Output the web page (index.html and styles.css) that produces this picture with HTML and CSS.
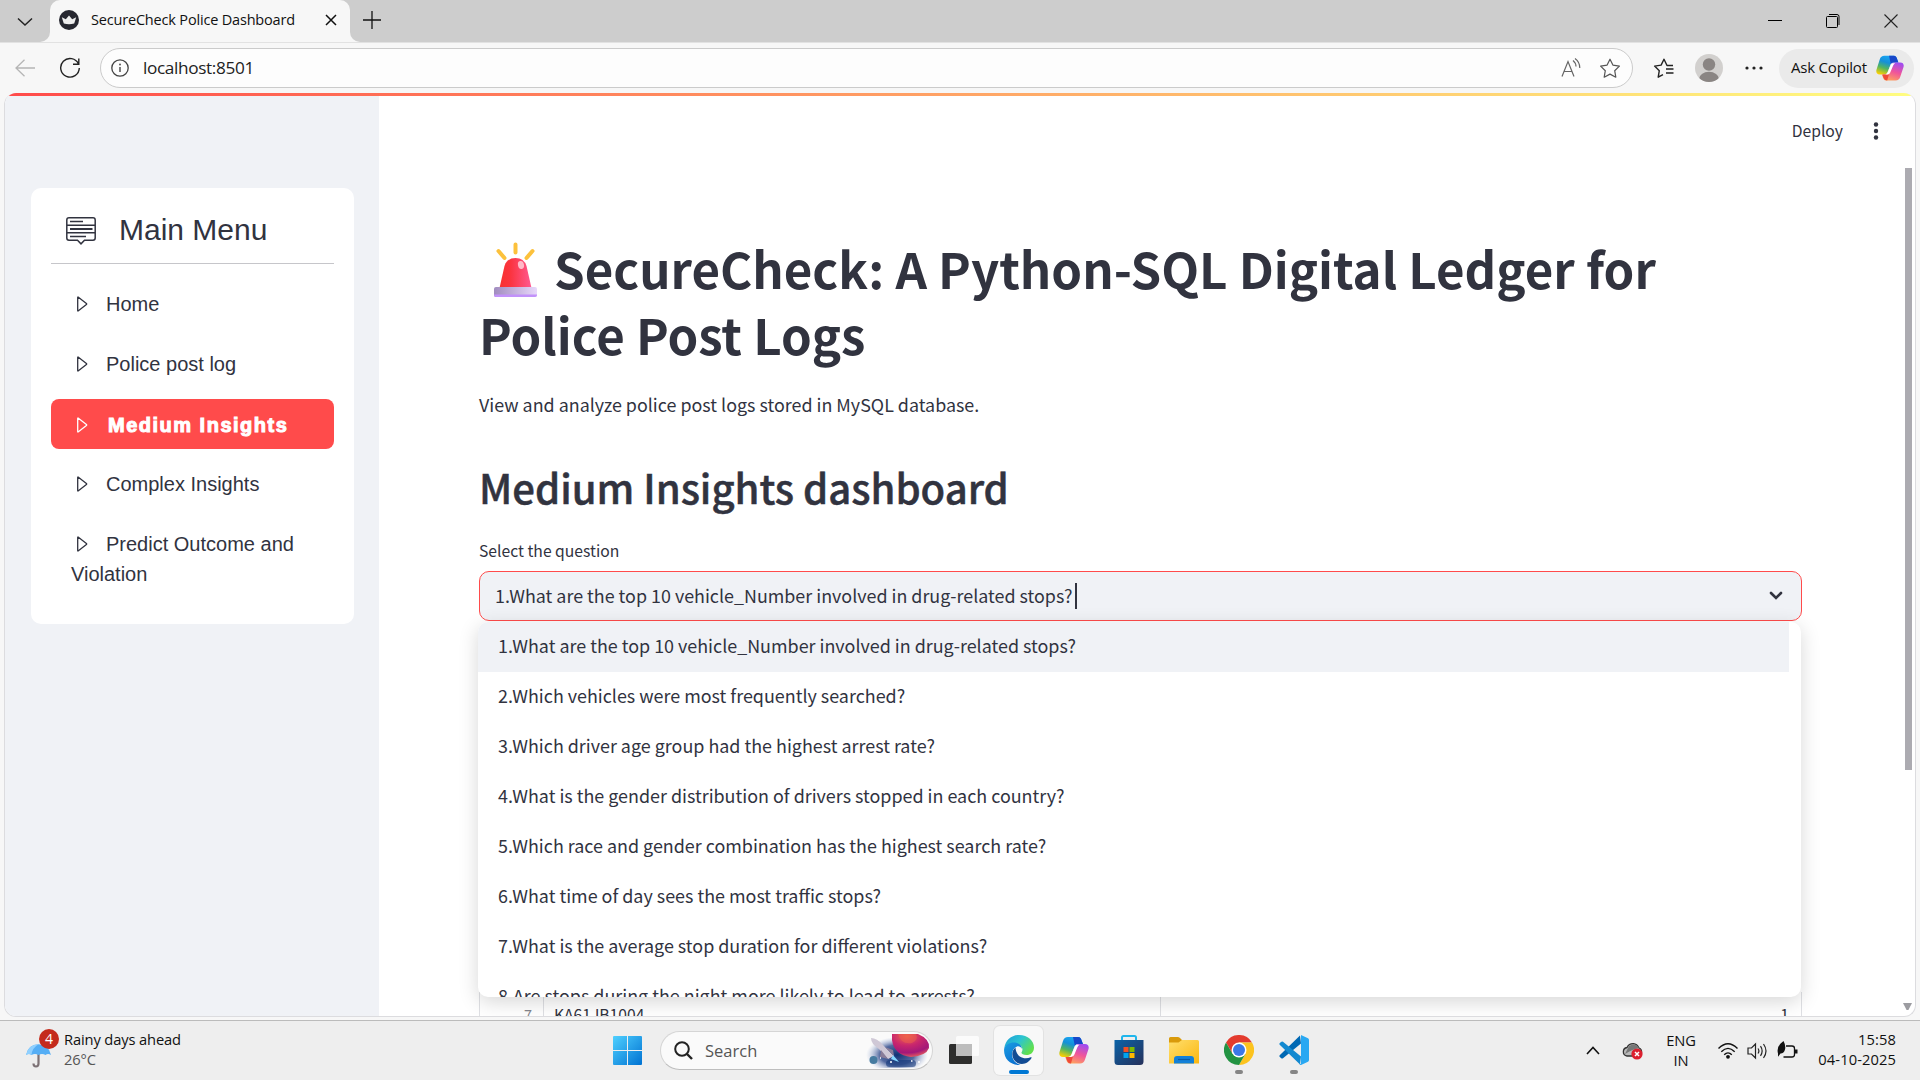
FILE: index.html
```
<!DOCTYPE html>
<html lang="en">
<head>
<meta charset="utf-8">
<title>SecureCheck Police Dashboard</title>
<link rel="stylesheet" href="styles.css">
</head>
<body>
<svg class="defs" aria-hidden="true">
  <defs>
    <linearGradient id="cpA" x1="0.6" y1="0" x2="0.2" y2="1"><stop offset="0" stop-color="#19a7f5"/><stop offset=".35" stop-color="#1590d8"/><stop offset=".65" stop-color="#52b560"/><stop offset="1" stop-color="#ffd000"/></linearGradient>
    <linearGradient id="cpB" x1="0.7" y1="0" x2="0.3" y2="1"><stop offset="0" stop-color="#a04cf0"/><stop offset=".5" stop-color="#f0559a"/><stop offset="1" stop-color="#ffa45c"/></linearGradient>
    <linearGradient id="edA" x1="0" y1="0" x2="1" y2=".6"><stop offset="0" stop-color="#1c9bd8"/><stop offset=".5" stop-color="#2cc4d2"/><stop offset="1" stop-color="#62e04c"/></linearGradient>
    <linearGradient id="edB" x1="0" y1="0" x2=".6" y2="1"><stop offset="0" stop-color="#1b9de2"/><stop offset="1" stop-color="#0a6fd0"/></linearGradient>
    <linearGradient id="win" x1="0" y1="0" x2="1" y2="1"><stop offset="0" stop-color="#4fd0ff"/><stop offset="1" stop-color="#0072d2"/></linearGradient>
    <linearGradient id="fold" x1="0" y1="0" x2="1" y2="1"><stop offset="0" stop-color="#ffdf6e"/><stop offset="1" stop-color="#fbb70f"/></linearGradient>
    <linearGradient id="store" x1="0" y1="0" x2="1" y2="1"><stop offset="0" stop-color="#0a63a8"/><stop offset="1" stop-color="#26305a"/></linearGradient>
    <linearGradient id="lamp" x1="0" y1="0" x2="1" y2="0"><stop offset="0" stop-color="#f8312f"/><stop offset=".35" stop-color="#fb3440"/><stop offset="1" stop-color="#ff5a92"/></linearGradient>
    <linearGradient id="lampbase" x1="0" y1="0" x2="1" y2="0"><stop offset="0" stop-color="#a18cbf"/><stop offset="1" stop-color="#e8d8fb"/></linearGradient>
    <radialGradient id="space"><stop offset="0" stop-color="#0e3174"/><stop offset=".55" stop-color="#36508f" stop-opacity=".85"/><stop offset="1" stop-color="#a5b6dc" stop-opacity="0"/></radialGradient>
    <radialGradient id="planet" cx=".4" cy=".1" r=".9"><stop offset="0" stop-color="#f0654c"/><stop offset=".45" stop-color="#c8266d"/><stop offset=".8" stop-color="#a3187a"/><stop offset="1" stop-color="#e0565f"/></radialGradient>
    <symbol id="copilot" viewBox="0 0 30 30">
      <path d="M9 2h10c2.500 0 3.200 2 3.800 4L24 9h-5c-2.200 0-3 1-3.700 3l-2.700 7c-.8 2.200-2 3-4.200 3H4c-3 0-4.200-2-3.500-5L4 6c.8-2.800 2.400-4 5-4z" fill="url(#cpA)"/>
      <path d="M14 2h5c2.500 0 3.200 2 3.800 4L24 9h-5c-1.500 0-2.500.5-3.200 1.800z" fill="#1747c9"/>
      <path d="M21 28.500H11c-2.500 0-3.200-2-3.800-4L6.200 22h3c2.200 0 3-1 3.700-3l3-7c.8-2.200 2-3 4.200-3h5.900c3 0 4.200 2 3.500 5L26 24.500c-.8 2.800-2.400 4-5 4z" fill="url(#cpB)"/>
      <path d="M7 22h4c2 0 3-1 3.500-2.500L12 28.400C9 28.500 8 26 7 22z" fill="#ef4a38"/>
      <path d="M17.500 9.800h3c-1 .5-1.600 1.300-2 2.200l-3 7.200c-.8 2-2 2.700-3.800 2.800h-2c1.500-.4 2.400-1.400 3-3l2.900-7c.4-1 1-1.800 1.900-2.200z" fill="#fff"/>
    </symbol>
    <symbol id="play" viewBox="0 0 20 20"><path d="M5.700 3.600v12.800q0 .9.700.4l8-6.200q.6-.6 0-1.200L6.400 3.200q-.7-.5-.7.400z" fill="none" stroke="currentColor" stroke-width="1.300"/></symbol>
  </defs>
</svg>

<div class="tabs">
  <div class="tab-search"><svg width="16" height="10" viewBox="0 0 16 10"><path d="M1 1.500l7 6.500 7-6.500" fill="none" stroke="#222" stroke-width="1.500"/></svg></div>
  <div class="tab">
    <svg width="20" height="20" viewBox="0 0 20 20"><circle cx="10" cy="10" r="10" fill="#262730"/><path d="M2.800 7.200l4 2 3.200-3.600 3.200 3.600 4-2-2 6.300q-5.200 1.600-10.400 0z" fill="#eee"/></svg>
    <span class="tab-title">SecureCheck Police Dashboard</span>
    <svg class="tab-close" width="12" height="12" viewBox="0 0 12 12"><path d="M1 1l10 10M11 1L1 11" stroke="#111" stroke-width="1.500"/></svg>
  </div>
  <div class="strip">
    <svg class="tab-new" width="18" height="18" viewBox="0 0 18 18"><path d="M9 0v18M0 9h18" stroke="#111" stroke-width="1.300"/></svg>
    <div class="win-controls">
      <svg width="14" height="14" viewBox="0 0 14 14"><path d="M0 6.500h14" stroke="#000"/></svg>
      <svg width="14" height="14" viewBox="0 0 14 14"><rect x=".5" y="2.500" width="11" height="11" rx="1" fill="none" stroke="#000"/><path d="M3 .5h8a2 2 0 0 1 2 2v8.500" fill="none" stroke="#000"/></svg>
      <svg width="14" height="14" viewBox="0 0 14 14"><path d="M.5.500l13 13M13.500.5l-13 13" stroke="#222" stroke-width="1.100"/></svg>
    </div>
  </div>
</div>

<div class="toolbar">
  <svg class="back" width="20" height="18" viewBox="0 0 20 18"><path d="M9.500.8L1 9l8.500 8.200M1 9h19" fill="none" stroke="#b5b5b5" stroke-width="1.300"/></svg>
  <svg class="reload" width="22" height="22" viewBox="0 0 22 22"><path d="M19.500 7A9.300 9.300 0 1 0 20.300 11M19.800 1.500V7.300H14" fill="none" stroke="#222" stroke-width="1.400"/></svg>
  <div class="address">
    <svg width="18" height="18" viewBox="0 0 18 18"><circle cx="9" cy="9" r="8.200" fill="none" stroke="#444" stroke-width="1.300"/><path d="M9 8v5" stroke="#444" stroke-width="1.400"/><circle cx="9" cy="5.500" r=".9" fill="#444"/></svg>
    <span class="url">localhost:8501</span>
    <svg class="read" width="20" height="20" viewBox="0 0 20 20"><path d="M1 18.500L7 3.500l6 15M3 13.500h8M12 2.500q3 2.500 3 6M14 .5q4.800 3.500 4.800 9.500" fill="none" stroke="#666" stroke-width="1.200"/></svg>
    <svg class="star" width="22" height="20" viewBox="0 0 22 20"><path d="M11 1.200l2.900 5.900 6.500 1-4.700 4.600 1.100 6.500-5.800-3.100-5.800 3.100 1.100-6.500L1.600 8.100l6.500-1z" fill="none" stroke="#555" stroke-width="1.200" stroke-linejoin="round"/></svg>
  </div>
  <svg class="favs" width="22" height="20" viewBox="0 0 22 20"><path d="M20 7.500h-6L11 1.200 8.100 7.100l-6.500 1 4.700 4.600-1.100 6.500 4.800-2.600M13 11h7.500M13 15h7.500" fill="none" stroke="#222" stroke-width="1.400" stroke-linejoin="round"/></svg>
  <svg class="avatar" width="28" height="28" viewBox="0 0 28 28"><defs><clipPath id="av"><circle cx="14" cy="14" r="14"/></clipPath></defs><g clip-path="url(#av)"><rect width="28" height="28" fill="#d2d0ce"/><circle cx="14" cy="10.500" r="6.200" fill="#8a8583"/><ellipse cx="14" cy="25" rx="10" ry="7.200" fill="#8a8583"/></g></svg>
  <svg class="more" width="18" height="4" viewBox="0 0 18 4"><g fill="#222"><circle cx="2" cy="2" r="1.600"/><circle cx="9" cy="2" r="1.600"/><circle cx="16" cy="2" r="1.600"/></g></svg>
  <div class="ask"><span>Ask Copilot</span><svg width="28" height="28"><use href="#copilot"/></svg></div>
</div>

<div class="viewport">
  <div class="page">
    <div class="rainbow"></div>
    <aside class="sidebar">
      <nav class="menu">
        <div class="menu-head">
          <svg width="30" height="28" viewBox="0 0 30 28" fill="none" stroke="#31333f" stroke-width="1.500"><path d="M3 .8h24a2.200 2.200 0 0 1 2.200 2.200v18a2.200 2.200 0 0 1-2.200 2.200h-8.500L15 26.800l-3.500-3.600H3A2.200 2.200 0 0 1 .8 21V3A2.200 2.200 0 0 1 3 .8zM1 8.200h28M1 15.800h28"/><path d="M4 4.600h13M4 19.400h16"/><path d="M4 12h22.500" stroke-width="2"/></svg>
          <span>Main Menu</span>
        </div>
        <div class="item"><svg><use href="#play"/></svg>Home</div>
        <div class="item"><svg><use href="#play"/></svg>Police post log</div>
        <div class="item active"><svg><use href="#play"/></svg><b>Medium Insights</b></div>
        <div class="item"><svg><use href="#play"/></svg>Complex Insights</div>
        <div class="item"><svg><use href="#play"/></svg>Predict Outcome and Violation</div>
      </nav>
    </aside>
    <main class="main">
      <header class="app-bar"><span>Deploy</span><svg width="6" height="18" viewBox="0 0 6 18"><g fill="#31333f"><circle cx="3" cy="2.500" r="2.200"/><circle cx="3" cy="9" r="2.200"/><circle cx="3" cy="15.500" r="2.200"/></g></svg></header>
      <h1><svg class="siren" width="43" height="56" viewBox="0 0 43 56"><g stroke="#fcc13c" stroke-width="4" stroke-linecap="round"><path d="M21.500 2.500v8M4.500 9l6 7M38.500 9l-6 7"/></g><path d="M5.500 46l5-22q2.500-8 11-8t11 8l5 22z" fill="url(#lamp)"/><ellipse cx="27" cy="23" rx="3" ry="4" fill="#ffb9c8" transform="rotate(-14 27 23)"/><rect y="45" width="43" height="10" rx="2" fill="url(#lampbase)"/><path d="M0 52.500h43v.5a2 2 0 0 1-2 2H2a2 2 0 0 1-2-2z" fill="#c292fa"/></svg><span class="l1">SecureCheck: A Python-SQL Digital Ledger for</span><br><span class="l2">Police Post Logs</span></h1>
      <p class="intro">View and analyze police post logs stored in MySQL database.</p>
      <h2>Medium Insights dashboard</h2>
      <label class="label">Select the question</label>
      <div class="select">
        <span class="value">1.What are the top 10 vehicle_Number involved in drug-related stops?</span><i class="caret"></i>
        <svg width="14" height="10" viewBox="0 0 14 10"><path d="M2 2l5 5 5-5" fill="none" stroke="#31333f" stroke-width="2.600" stroke-linecap="round"/></svg>
        <ul class="options">
          <li class="current">1.What are the top 10 vehicle_Number involved in drug-related stops?</li>
          <li>2.Which vehicles were most frequently searched?</li>
          <li>3.Which driver age group had the highest arrest rate?</li>
          <li>4.What is the gender distribution of drivers stopped in each country?</li>
          <li>5.Which race and gender combination has the highest search rate?</li>
          <li>6.What time of day sees the most traffic stops?</li>
          <li>7.What is the average stop duration for different violations?</li>
          <li>8.Are stops during the night more likely to lead to arrests?</li>
        </ul>
      </div>
      <div class="table-row"><span class="idx">7</span><span class="veh">KA61JB1004</span><span class="num">1</span></div>
    </main>
    <div class="scroll"><i class="thumb"></i><i class="down"></i></div>
  </div>
</div>

<div class="taskbar">
  <div class="weather">
    <div class="umbrella">
      <svg width="26" height="26" viewBox="0 0 26 26"><path d="M12.500 11v10.500q0 3-2.500 3t-2.500-3" fill="none" stroke="#7d7276" stroke-width="2.200"/><path d="M0 13Q2 2.500 12.500 2.200 23 2.500 25 13q-3-2-5.500 0-3.500-2-7 0-3.500-2-7 0Q3 11 0 13z" fill="#55aef5"/><path d="M0 13Q2 2.500 12.500 2.200 6 6 5.500 13 3 11 0 13z" fill="#8fd0ff"/></svg>
      <span class="badge">4</span>
    </div>
    <div class="weather-text"><span>Rainy days ahead</span><span class="dim">26°C</span></div>
  </div>
  <svg class="start" width="29" height="29" viewBox="0 0 29 29"><path d="M1 0h13v14H0V1a1 1 0 0 1 1-1zM15 0h13a1 1 0 0 1 1 1v13H15zM0 15h14v14H1a1 1 0 0 1-1-1zM15 15h14v13a1 1 0 0 1-1 1H15z" fill="url(#win)"/></svg>
  <div class="search">
    <svg width="19" height="19" viewBox="0 0 19 19"><circle cx="8" cy="8" r="6.800" fill="none" stroke="#222" stroke-width="2"/><path d="M13 13l5 5" stroke="#222" stroke-width="2.400"/></svg>
    <span>Search</span>
    <svg class="art" width="64" height="34" viewBox="0 0 64 34"><ellipse cx="31" cy="21" rx="31" ry="18" fill="url(#space)"/><rect x="20" y="26" width="30" height="7" rx="3.500" fill="#14397c" opacity=".6"/><path d="M26 0h26q12 5 11 14-3 8-18 9-17-2-19-17z" fill="url(#planet)"/><path d="M32 0h18q3 6-4 9-11 2-14-9z" fill="#ee604c" opacity=".5"/><circle cx="7.500" cy="26" r="4" fill="#467ba0"/><path d="M5 4q6 0 12 7l11 11-6 3-9-10Q5 10 5 4z" fill="#cfc8d6"/><path d="M15 16l-1 7 8 2zM19 13l8 3 1 6z" fill="#8a7d99"/><path d="M27 21l6 7-8-3z" fill="#85d8ff"/><path d="M14 24h1M24 28h2M45 27h1.500M52 28h2" stroke="#fff" stroke-width="1.500"/></svg>
  </div>
  <div class="apps">
    <div class="app"><svg width="30" height="30" viewBox="0 0 30 30"><rect x="0" y="9" width="23" height="20" rx="1.500" fill="#2e2e2d"/><rect x="7" y="1" width="23" height="20" rx="1.500" fill="#fff" opacity=".75"/><rect x="7" y="9" width="16" height="12" fill="#bdbdbd"/></svg></div>
    <div class="app open"><svg width="30" height="30" viewBox="0 0 30 30"><path d="M.3 13C1.500 5 7.500 0 15 0c9 0 15 6 15 12.500 0 5-3.500 7.500-7.500 7.500-3.500 0-5.500-1.300-5-2.500 1.800-2.500 1-5.500-1.500-7C11 7.500 4 8.500.3 13z" fill="url(#edA)"/><path d="M.2 13.500C2.500 8.500 8 6.500 13 8c3 1 5 3.500 5 6-1-2-3-3-5-2.500-4 1.500-6 6.500-4.500 11 1 3.500 4 6.500 8 7.400C6 31-1 23 .2 13.500z" fill="url(#edB)"/><path d="M11.500 12.500c-5 4-4 12 2 15.500 6 2.500 11.500-.5 14-5 .3-.8-.2-1-.8-.7C20 25 12 22 11.500 12.500z" fill="#124c94"/></svg><i class="run on"></i></div>
    <div class="app"><svg width="30" height="30"><use href="#copilot"/></svg></div>
    <div class="app"><svg width="30" height="30" viewBox="0 0 30 30"><path d="M8 6V2.500A1.500 1.500 0 0 1 9.500 1h11A1.500 1.500 0 0 1 22 2.500V6" fill="none" stroke="#1fb6ec" stroke-width="2"/><path d="M.5 5h29v21.500a3.500 3.500 0 0 1-3.500 3.500H4a3.500 3.500 0 0 1-3.500-3.500z" fill="url(#store)"/><path d="M9.500 12h5v5h-5z" fill="#f25022"/><path d="M15.500 12h5v5h-5z" fill="#7fba00"/><path d="M9.500 18h5v5h-5z" fill="#00a4ef"/><path d="M15.500 18h5v5h-5z" fill="#ffb900"/></svg></div>
    <div class="app"><svg width="30" height="30" viewBox="0 0 30 30"><path d="M0 3.500A1.500 1.500 0 0 1 1.500 2H9q1.500 0 2.500 1.500L13 5v4H0z" fill="#d99a0b"/><path d="M0 7.500h9.500L13 5h15.500A1.500 1.500 0 0 1 30 6.500v22H0z" fill="url(#fold)"/><path d="M5 28.500v-4.500q0-3 3-3h14q3 0 3 3v4.500z" fill="#1380d8"/><path d="M9 24.500h12" stroke="#0a5aa5" stroke-width="1.200"/></svg></div>
    <div class="app"><svg width="30" height="30" viewBox="0 0 30 30"><path d="M2 7.500A15 15 0 0 1 28 7.500H15L8.500 18.700z" fill="#e33b2e"/><path d="M28 7.500A15 15 0 0 1 15 30l6.500-11.200L15 7.500z" fill="#fcc31e"/><path d="M15 30A15 15 0 0 1 2 7.500l6.500 11.300h13z" fill="#229342"/><circle cx="15" cy="15" r="7.500" fill="#fff"/><circle cx="15" cy="15" r="6" fill="#3b78e7"/></svg><i class="run"></i></div>
    <div class="app"><svg width="30" height="30" viewBox="0 0 30 30"><path d="M22 8.500L4 23.300Q3 24 2 23L.6 21.700Q0 21 .7 20.200L21 .6z" fill="#0068b3"/><path d="M22 21.500L4 6.700Q3 6 2 7L.6 8.300Q0 9 .7 9.800L21 29.400z" fill="#1389d0"/><path d="M22 0l7 3.200q1 .6 1 1.800v20q0 1.200-1 1.800L22 30q-1 .2-1.500-.8.800.3 1.500-.7z" fill="#29a8f2"/></svg><i class="run"></i></div>
  </div>
  <div class="tray">
    <svg class="t-up" width="14" height="9" viewBox="0 0 14 9"><path d="M1 8l6-6.500L13 8" fill="none" stroke="#111" stroke-width="1.600"/></svg>
    <svg class="t-cloud" width="21" height="18" viewBox="0 0 21 18"><path d="M5 14a4.300 4.300 0 0 1 0-8.500Q7 1.500 11.500 1.700 15 2 17 6q3 1 2.500 5L12 14z" fill="#b9b9b9" stroke="#333" stroke-width="1.300"/><path d="M3 12q8-5 14-6Q13 0 7 4z" fill="#777"/><circle cx="15" cy="12" r="5.600" fill="#dc1f2e"/><path d="M13 10l4 4M17 10l-4 4" stroke="#fff" stroke-width="1.500"/></svg>
    <div class="lang"><span>ENG</span><span>IN</span></div>
    <svg class="t-wifi" width="20" height="16" viewBox="0 0 20 16"><path d="M.5 5.500q9.500-9.500 19 0M3.300 8.800q6.700-6.800 13.400 0M6.200 11.800q3.800-3.800 7.600 0" fill="none" stroke="#111" stroke-width="1.400"/><circle cx="10" cy="13.800" r="1.900" fill="#111"/></svg>
    <svg class="t-vol" width="21" height="18" viewBox="0 0 21 18"><path d="M1 6h3.500L8.500 2v14l-4-4H1zM11 6.500q1.800 2.500 0 5M13.500 4.200q3.300 4.800 0 9.600M16.500 2q5 7 0 14" fill="none" stroke="#222" stroke-width="1.200"/></svg>
    <svg class="t-bat" width="21" height="18" viewBox="0 0 21 18"><path d="M9 5h6q2.500 0 2.500 2.500v6Q17.500 16 15 16H6.500" fill="none" stroke="#111" stroke-width="1.300"/><path d="M18 8.500h2.500v4H18z" fill="#111"/><path d="M1 12.500Q-1 5 6.500 0q2.500 4.500 1.500 8.500T3.500 12.500L1 15.800z" fill="#111"/></svg>
    <div class="clock"><span>15:58</span><span>04-10-2025</span></div>
  </div>
</div>
</body>
</html>
```
FILE: styles.css
```
* { box-sizing: border-box; }
body {
  margin: 0; width: 1920px; height: 1080px; overflow: hidden;
  display: flex; flex-direction: column;
  background: #f7f7f7; color: #111;
  font-family: "Open Sans", "Noto Sans", sans-serif;
}
svg { display: block; flex: none; }
.defs { position: absolute; width: 0; height: 0; }

/* browser tab strip */
.tabs { height: 42px; background: linear-gradient(#cdcdcd 50%, #f7f7f7 50%); display: flex; flex: none; }
.tab-search { width: 50px; height: 42px; padding: 17px 0 0 17px; background: #cdcdcd; border-radius: 0 0 10px 0; }
.tab {
  width: 300px; height: 42px; flex: none; display: flex; align-items: center;
  padding: 0 13px 2px 9px; background: #f7f7f7; border-radius: 10px 10px 0 0;
}
.tab-title { margin: -2px 0 0 12px; font-size: 14.5px; letter-spacing: -0.18px; white-space: nowrap; }
.tab-close { margin-left: auto; }
.strip { flex: 1; height: 42px; display: flex; align-items: center; background: #cdcdcd; border-radius: 0 0 0 10px; }
.tab-new { margin: -3px 0 0 13px; }
.win-controls { margin-left: auto; display: flex; gap: 44px; padding-right: 22px; }

/* address toolbar */
.toolbar { height: 51px; flex: none; display: flex; align-items: center; border-top: 1px solid #e2e2e2; background: #f7f7f7; }
.back { margin-left: 15px; }
.reload { margin-left: 24px; }
.address {
  width: 1533px; height: 40px; margin-left: 19px; flex: none; padding: 0 11px 0 10px;
  display: flex; align-items: center; background: #fdfdfd; border: 1px solid #cbcbcb; border-radius: 20px;
}
.url { margin: -2px 0 0 14px; font-size: 17.2px; letter-spacing: -0.35px; color: #222; }
.read { margin-left: auto; }
.star { margin-left: 18px; }
.favs { margin-left: 20px; }
.avatar { margin-left: 20px; }
.more { margin-left: 22px; }
.ask {
  width: 135px; height: 39px; margin-left: 16px; padding: 0 10px 0 12px;
  display: flex; align-items: center; justify-content: space-between;
  background: #eaeaea; border-radius: 20px; font-size: 15px; letter-spacing: -0.2px; white-space: nowrap;
}
.ask span { margin-top: -2px; }

/* web page */
.viewport { height: 927px; padding: 0 4px 3px; flex: none; }
.page {
  height: 924px; display: grid; grid-template: 3px 1fr / 374px 1fr 12px; overflow: hidden;
  background: #fff; border: 1px solid #dcdcdf; border-top: 0; border-radius: 12px; color: #31333f;
}
.rainbow { grid-column: 1 / 4; background: linear-gradient(90deg, #ff4b4b, #fffd80); }
.sidebar { background: #f0f2f6; padding: 92px 25px 0 26px; }
.menu { height: 436px; padding: 20px 20px 0; background: #fff; border-radius: 10px; font: 20px/30px "Liberation Sans", Arial, sans-serif; }
.menu-head { height: 56px; display: flex; align-items: center; padding: 0 0 12px 15px; gap: 23px; border-bottom: 1px solid #c6c6ca; font-size: 30px; margin-bottom: 15px; white-space: nowrap; }
.menu-head svg { margin-top: 2px; }
.item { padding: 10px 17px 10px 20px; margin-bottom: 10px; border-radius: 8px; }
.item svg { display: inline-block; width: 20px; height: 20px; margin: 0 14px 0 1px; vertical-align: -3px; }
.item.active { background: #ff4b4b; color: #fff; white-space: nowrap; padding-top: 11px; padding-bottom: 9px; }
.item b { margin-left: 2px; font-weight: 700; letter-spacing: 1.5px; -webkit-text-stroke: 1px #fff; }

.main { padding-left: 100px; display: flex; flex-direction: column; overflow: hidden; font-family: "Noto Sans CJK SC", sans-serif; font-size: 17.9px; }
.app-bar { height: 70px; flex: none; display: flex; align-items: center; justify-content: flex-end; gap: 30px; padding: 0 24px 1px 0; font-size: 15.7px; }
h1 { margin: 69px 0 0; height: 132px; flex: none; font-size: 49.2px; line-height: 66px; font-weight: 700; white-space: nowrap; }
.siren { display: inline-block; margin: 0 17px 0 15px; vertical-align: -9px; }
.intro { margin: 22px 0 0; line-height: 30px; flex: none; }
h2 { margin: 41px 0 0; line-height: 54px; height: 54px; flex: none; font-size: 40.05px; font-weight: 500; -webkit-text-stroke: 0.5px #31333f; }
.label { margin-top: 25px; height: 32px; line-height: 24px; font-size: 15.7px; flex: none; }
.select {
  position: relative; flex: none; width: 1323px; height: 50px; padding: 0 18px 0 15px;
  display: flex; align-items: center; background: #f0f2f6; border: 1px solid #ff4b4b; border-radius: 10px;
}
.value, .intro { white-space: nowrap; }
.value { margin-top: -3px; }
.caret { width: 2px; height: 26px; margin: 0 auto 0 2px; background: #31333f; }
.options {
  position: absolute; left: -2px; top: 50px; width: 1323px; height: 375px; overflow: hidden;
  margin: 0; padding: 0 12px 0 0; list-style: none; background: #fff; border-radius: 10px;
  box-shadow: 0 5px 20px rgba(0, 0, 0, 0.16);
}
.options li { height: 50px; line-height: 47px; padding-left: 20px; font-size: 17.91px; }
.options .current { background: #f0f2f6; }
.table-row {
  display: flex; flex: none; width: 1323px; height: 44px; margin-top: 371px; line-height: 45px;
  border: solid #dfe0e4; border-width: 0 1px; font-size: 15.7px;
}
.idx { width: 64px; padding-right: 11px; text-align: right; color: #85868d; font-size: 14.5px; border-right: 1px solid #dfe0e4; }
.veh { width: 617px; padding-left: 10px; border-right: 1px solid #dfe0e4; }
.num { flex: 1; padding-right: 12px; text-align: right; }
.scroll { display: flex; flex-direction: column; justify-content: space-between; padding: 72px 3px 6px 0; align-items: flex-end; }
.thumb { width: 7px; height: 602px; background: #acabb1; }
.down { width: 9px; height: 7px; background: #9c9ca1; clip-path: polygon(0 0, 100% 0, 60% 100%, 40% 100%); }

/* taskbar */
.taskbar { height: 60px; flex: none; display: flex; align-items: center; background: #eee; border-top: 1px solid #bbb; font-size: 14.7px; }
.weather { width: 613px; display: flex; padding-left: 26px; }
.umbrella { position: relative; width: 38px; padding-top: 10px; }
.badge { position: absolute; left: 13px; top: -3px; width: 20px; height: 20px; border-radius: 50%; background: #c42b1c; color: #fff; font-size: 14px; line-height: 20px; text-align: center; }
.weather-text { margin-top: -3px; line-height: 20px; letter-spacing: -0.13px; display: flex; flex-direction: column; }
.dim { color: #555; }
.search {
  width: 273px; height: 39px; margin-left: 18px; display: flex; align-items: center;
  background: #fafafa; border: 1px solid #d5d5d5; border-bottom-color: #bebebe; border-radius: 20px;
  padding: 0 2px 0 13px; font-size: 16.5px; color: #555;
}
.search span { margin-left: 12px; }
.art { margin-left: auto; }
.apps { display: flex; margin-left: 3px; }
.app { width: 49px; height: 49px; margin: 0 3px; display: flex; flex-direction: column; align-items: center; padding-top: 9px; }
.app.open { background: #f8f8f8; border-radius: 6px; box-shadow: 0 0 0 1px #e2e2e2; }
.run { width: 8px; height: 4px; margin-top: 5px; border-radius: 2px; background: #858585; flex: none; }
.run.on { width: 20px; background: #0078d4; }
.tray { margin-left: auto; padding-right: 24px; display: flex; align-items: center; line-height: 20px; letter-spacing: -0.1px; }
.lang { display: flex; flex-direction: column; align-items: center; width: 30px; margin: -2px 22px 0 23px; }
.t-cloud { margin-left: 22px; }
.t-vol { margin-left: 9px; }
.t-bat { margin: -2px 0 0 9px; }
.clock { width: 98px; margin-top: -4px; display: flex; flex-direction: column; align-items: flex-end; letter-spacing: 0.1px; }
```
